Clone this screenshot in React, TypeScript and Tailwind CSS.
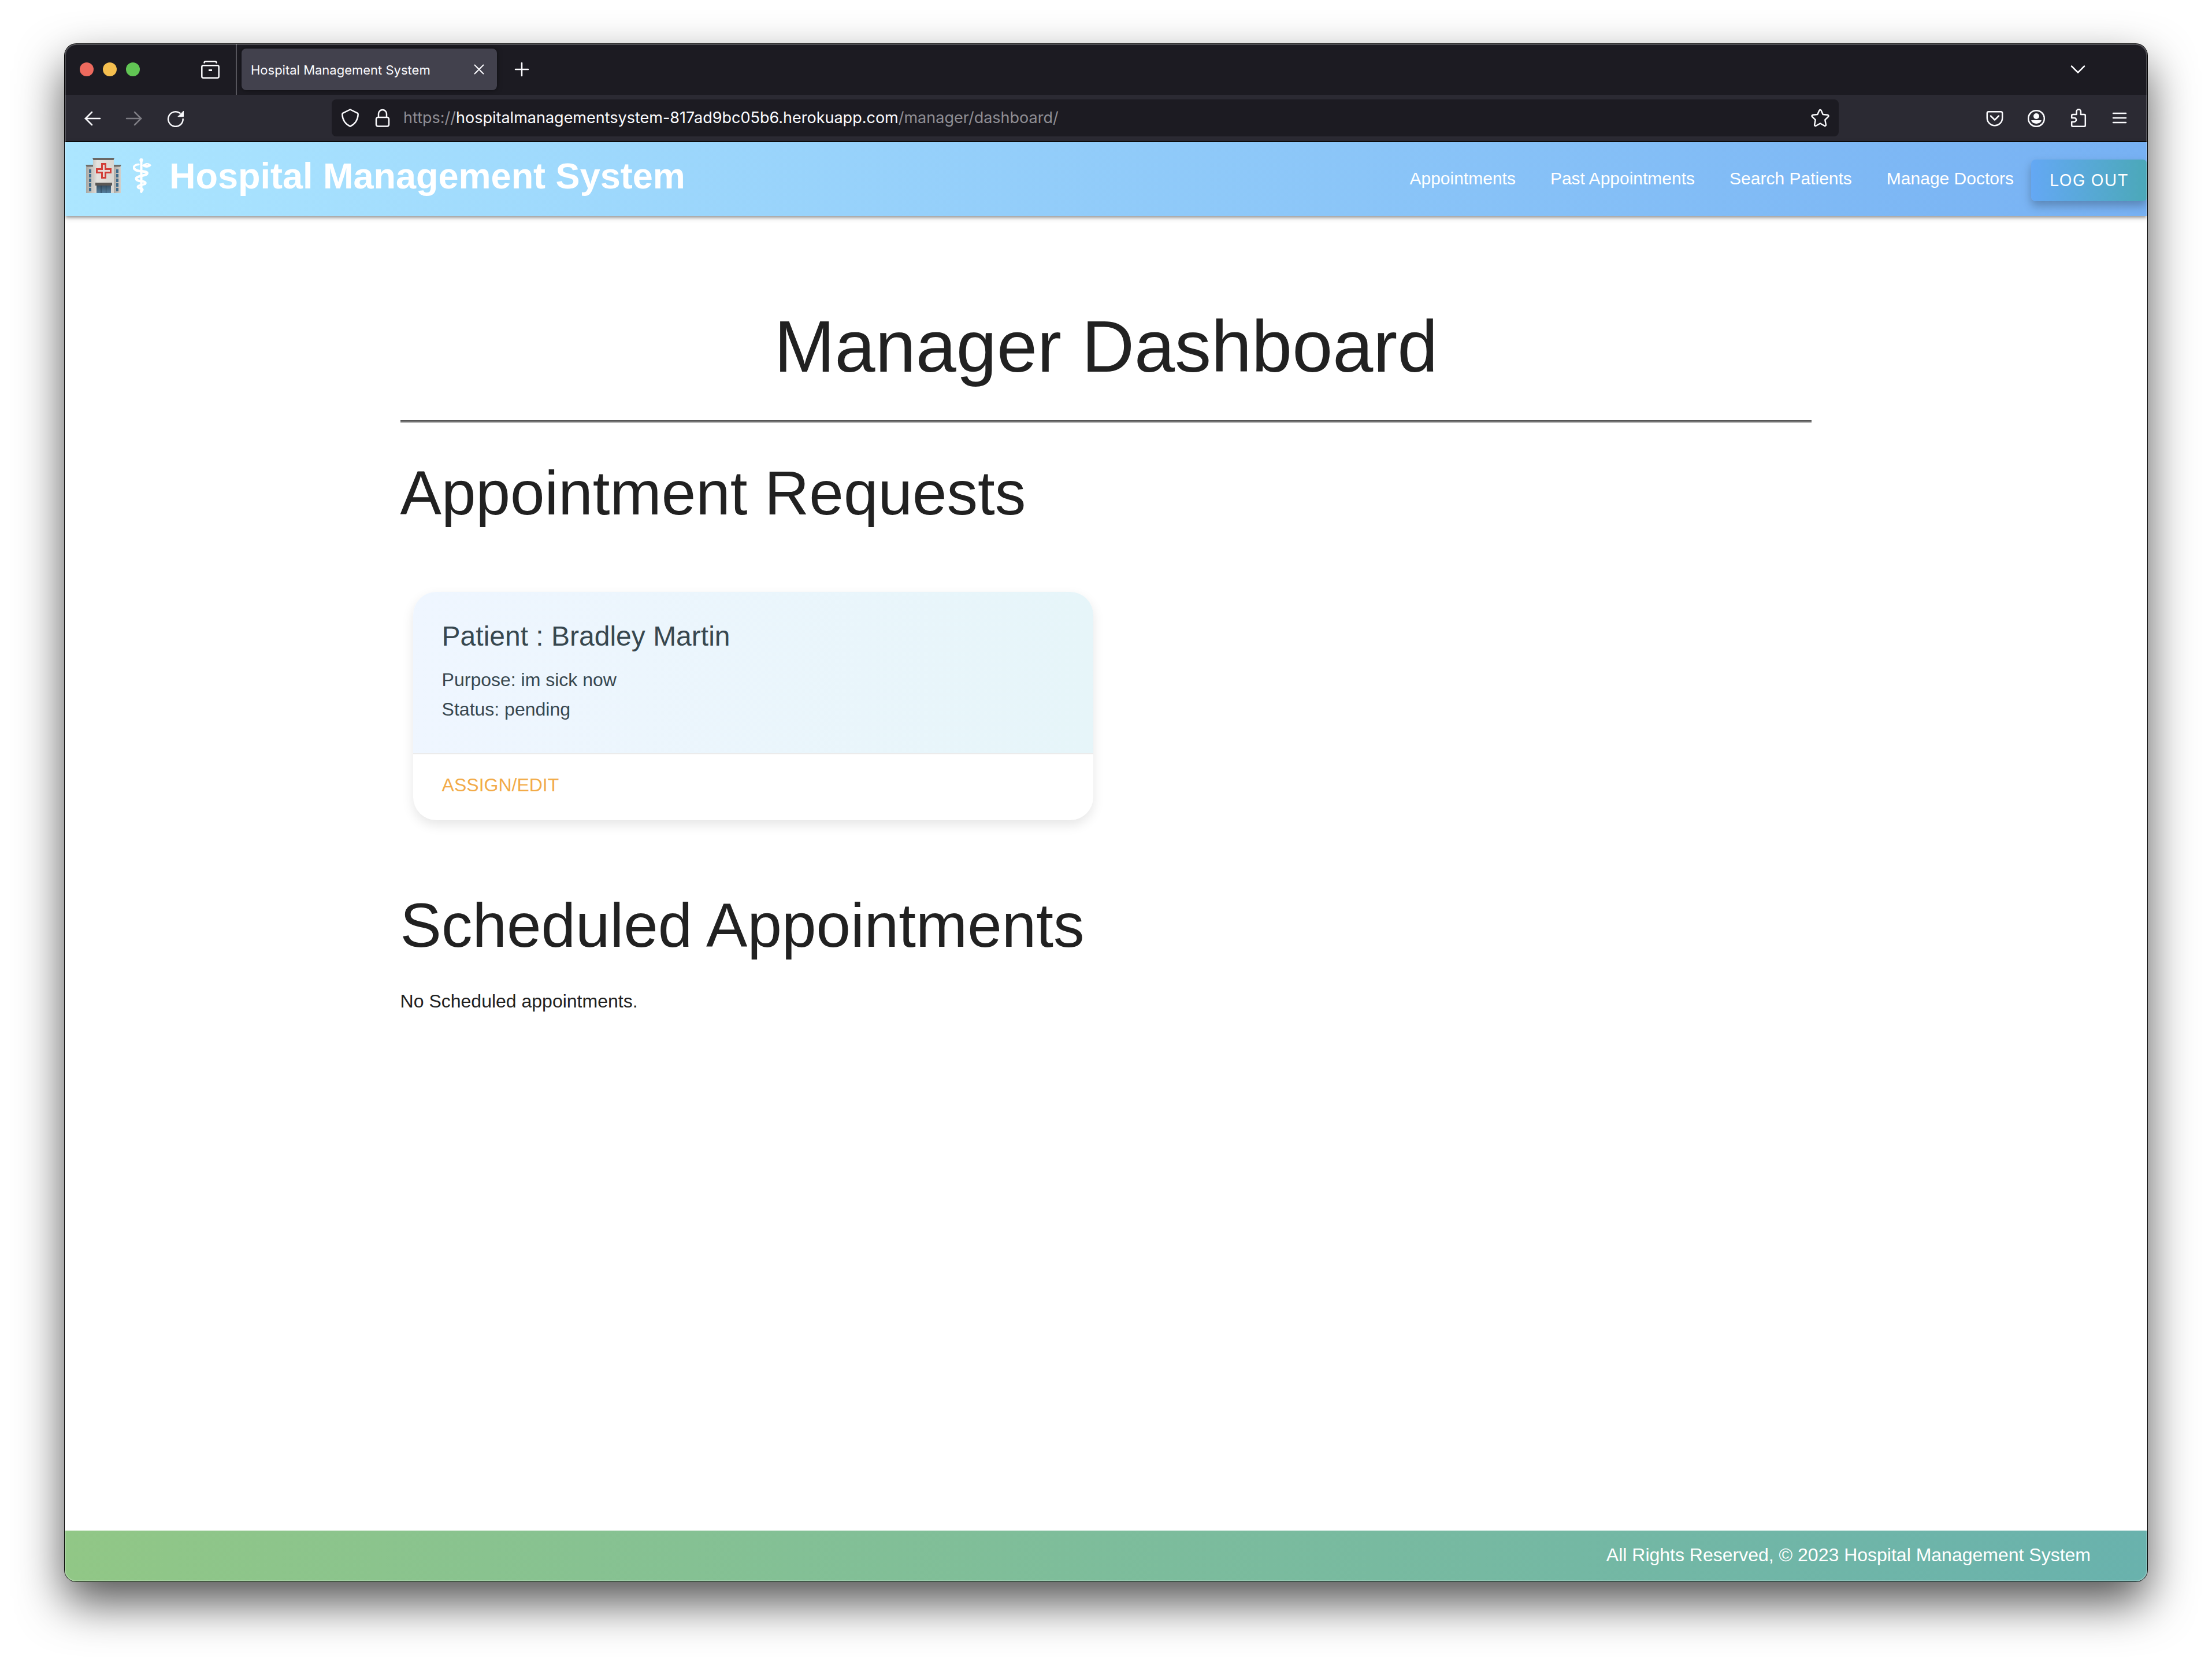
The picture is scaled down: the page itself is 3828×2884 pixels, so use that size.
import React from "react";

type IconProps = { className?: string; children: React.ReactNode };

function Icon({ className = "", children }: IconProps) {
  return (
    <svg
      viewBox="0 0 32 32"
      className={`size-8 shrink-0 ${className}`}
      fill="none"
      stroke="currentColor"
      strokeWidth={2.5}
      strokeLinecap="round"
      strokeLinejoin="round"
      aria-hidden="true"
    >
      {children}
    </svg>
  );
}

function TabBar() {
  return (
    <div className="flex h-[88px] items-center bg-[#1c1b22] text-[#fbfbfe]">
      <div className="flex gap-4 pl-[26px]">
        <button aria-label="Close window" className="size-6 rounded-full bg-[#ed6a5e]" />
        <button aria-label="Minimize window" className="size-6 rounded-full bg-[#f5bf4f]" />
        <button aria-label="Zoom window" className="size-6 rounded-full bg-[#61c554]" />
      </div>
      <button aria-label="Firefox View" className="ml-[106px]">
        <Icon>
          <path d="M5.5 4.5C5.5 2.5 6.500 2.200 8 2.200h16c1.500 0 2.500.3 2.500 2.300" />
          <rect x="1.300" y="9.300" width="29.400" height="21.400" rx="2.500" />
          <path d="M13 17.500h6" strokeLinecap="butt" strokeWidth={3} />
        </Icon>
      </button>
      <div className="ml-7 h-full w-0.5 bg-[#57565d]" />
      <div className="ml-2 flex h-[72px] w-[442px] items-center justify-between rounded-lg bg-[#42414d] pr-[22px] pl-4 shadow-[0_0_8px_rgba(0,0,0,0.5)]">
        <span className="pt-0.5 font-['Inter',sans-serif] text-[22px]">Hospital Management System</span>
        <button aria-label="Close tab">
          <svg viewBox="0 0 18 18" className="size-[18px]" stroke="currentColor" strokeWidth={2} strokeLinecap="round" aria-hidden="true">
            <path d="M1.500 1.500l15 15M16.500 1.500l-15 15" />
          </svg>
        </button>
      </div>
      <button aria-label="New tab" className="ml-[27px]">
        <Icon>
          <path d="M16 5v22M5 16h22" />
        </Icon>
      </button>
      <button aria-label="List all tabs" className="mr-[104px] ml-auto">
        <Icon>
          <path d="M5 10.500l11 11 11-11" />
        </Icon>
      </button>
    </div>
  );
}

function Toolbar() {
  return (
    <div className="flex h-[82px] items-center border-b-2 border-[#0c0c0d] bg-[#2b2a33] text-[#fbfbfe]">
      <div className="flex w-[462px] items-center gap-10 pl-8">
        <button aria-label="Back">
          <Icon>
            <path d="M29 17H3.500M15 6L4 17l11 11" />
          </Icon>
        </button>
        <button aria-label="Forward" className="text-[#7c7b82]">
          <Icon>
            <path d="M3 17h25.500M17 6l11 11-11 11" />
          </Icon>
        </button>
        <button aria-label="Reload">
          <Icon>
            <path d="M28.700 18A12.800 12.800 0 1 1 23.500 7.700" />
            <path d="M29.500 4.500v9.200h-9.200z" fill="currentColor" strokeWidth={1} />
          </Icon>
        </button>
      </div>
      <div className="flex h-16 flex-1 items-center rounded-lg bg-[#1c1b22] pr-4 pl-4">
        <Icon>
          <path d="M16 1.500L28.500 7.700c.9.500 1.300 1.200 1.200 2.300C29.200 20 24.500 26.500 16 30.700 7.500 26.500 2.800 20 2.300 10c-.1-1.100.3-1.800 1.200-2.300z" />
        </Icon>
        <Icon className="ml-6">
          <path d="M9 14V9a7 7 0 0 1 14 0v5" />
          <rect x="5" y="15" width="22" height="15.500" rx="3" />
        </Icon>
        <div className="ml-5 flex-1 font-['Inter',sans-serif] text-[27px] text-[#8f8e94]">
          https://<span className="text-[#fbfbfe]">hospitalmanagementsystem-817ad9bc05b6.herokuapp.com</span>/manager/dashboard/
        </div>
        <button aria-label="Bookmark this page">
          <Icon>
            <path d="M14.300 3.200c.7-1.500 2.700-1.500 3.400 0l3 6.800 7.800.8c1.900.2 2.500 2 1.200 3.300l-5.400 5.200 1.500 8.300c.3 1.800-1.200 2.800-2.700 1.900L16 25.500l-7.100 4c-1.500.9-3-.1-2.700-1.900l1.500-8.300-5.400-5.200c-1.300-1.300-.7-3.100 1.200-3.300l7.800-.8z" />
          </Icon>
        </button>
      </div>
      <div className="flex w-[534px] items-center justify-end gap-10 pr-8">
        <button aria-label="Save to Pocket">
          <Icon>
            <path d="M5.500 5.200h21c1.600 0 2.700 1.100 2.700 2.700v8A13.200 13.200 0 0 1 2.800 16V7.900c0-1.600 1.100-2.700 2.700-2.700z" />
            <path d="M9 12.500l7 7 7-7" />
          </Icon>
        </button>
        <button aria-label="Account">
          <Icon>
            <circle cx="16" cy="17" r="13.800" />
            <circle cx="16" cy="13" r="5" fill="currentColor" stroke="none" />
            <path d="M8 20h16c.6 0 1 .5.700 1.100C23 24.500 20 26 16 26s-7-1.500-8.700-4.900c-.3-.6.100-1.100.7-1.100z" fill="currentColor" stroke="none" />
          </Icon>
        </button>
        <button aria-label="Extensions">
          <Icon>
            <path d="M5.200 16V12a2 2 0 0 1 2-2h6.300V5a3.700 3.700 0 0 1 7.400 0v5h5.900a2 2 0 0 1 2 2v16.700a2 2 0 0 1-2 2H7.200a2 2 0 0 1-2-2V22.700h4.500a3.350 3.350 0 0 0 0-6.700z" />
          </Icon>
        </button>
        <button aria-label="Application menu">
          <Icon>
            <path d="M5 8h22M5 16h22M5 24h22" />
          </Icon>
        </button>
      </div>
    </div>
  );
}

function HospitalEmoji() {
  const rows = [20, 28, 36, 44, 52];
  return (
    <svg viewBox="0 0 62 62" className="h-[62px] w-[62px]" aria-hidden="true">
      <defs>
        <linearGradient id="wing" x1="0" x2="1">
          <stop offset="0" stopColor="#a9a7a2" />
          <stop offset="1" stopColor="#d3d0ca" />
        </linearGradient>
        <linearGradient id="tower" x1="0" x2="1">
          <stop offset="0" stopColor="#cbc8c3" />
          <stop offset="0.2" stopColor="#e4e2de" />
          <stop offset="1" stopColor="#d8d6d1" />
        </linearGradient>
        <linearGradient id="door" x1="0" y1="0" x2="0" y2="1">
          <stop offset="0" stopColor="#34495c" />
          <stop offset="1" stopColor="#54809f" />
        </linearGradient>
      </defs>
      <rect x="1" y="14" width="13" height="47" fill="url(#wing)" />
      <rect x="48" y="14" width="13" height="47" fill="url(#wing)" />
      <path d="M0 12h14v3.500H2z" fill="#6f6c69" />
      <path d="M48 12h14l-2 3.500H48z" fill="#6f6c69" />
      <rect x="13" y="2" width="36" height="59" fill="url(#tower)" />
      <path d="M12 0h38l-1.500 4h-35z" fill="#6b6865" />
      {rows.map((y) => (
        <g key={y} fill="#3f6c8c">
          <rect x="6" y={y} width="4" height="6" />
          <rect x="53" y={y} width="4" height="6" />
        </g>
      ))}
      <path d="M27 9h9v9h9v9h-9v9h-9v-9h-9v-9h9z" fill="#d23f38" />
      <path d="M30 12h3v9h9v3h-9v9h-3v-9h-9v-3h9z" fill="#e6dcd8" />
      <rect x="19" y="46" width="25" height="15" fill="url(#door)" />
      <path d="M27 47v14M35.500 47v14" stroke="#22384a" strokeWidth="1" />
      <rect x="17" y="43" width="29" height="5" fill="#5b5855" />
    </svg>
  );
}

function StaffOfAesculapius() {
  return (
    <svg viewBox="0 0 32 60" className="h-[60px] w-8" fill="none" stroke="white" strokeLinecap="round" aria-hidden="true">
      <circle cx="14.500" cy="3" r="3.200" fill="white" stroke="none" />
      <path d="M14.500 4v54" strokeWidth="4" />
      <path d="M10 10.500C3.500 10.500 0 14.500 2.500 18" strokeWidth="3.500" />
      <path d="M2.500 18c3 4 9 4 15 4.500 6 .5 8.500 2 6.500 4.500C21.500 30 9 30 6 34" strokeWidth="4.500" />
      <path d="M6 34c-1.500 3.500 3 5 9 5.500 6 .5 8 2.500 6 4.500" strokeWidth="4" />
      <path d="M21 44c-2 2-9 1.500-12 4-2 2 .5 3.500 4 4 5 .5 5 3 1 5" strokeWidth="3.500" />
      <path d="M16 12.500c5 4 9 3.500 13 1.500 3-1 3-3-.5-4.500-4-2-8-1-12.500 3z" fill="white" strokeWidth="1" />
      <circle cx="24.500" cy="11" r="1" fill="#a9e1fd" stroke="none" />
    </svg>
  );
}

const links = ["Appointments", "Past Appointments", "Search Patients", "Manage Doctors"];

function SiteHeader() {
  return (
    <header className="relative flex h-32 items-center justify-between bg-linear-to-r from-[#ace6ff] to-[#77b1f3] text-white shadow-[0_4px_4px_0_rgba(0,0,0,0.14),0_6px_2px_-4px_rgba(0,0,0,0.12),0_2px_10px_0_rgba(0,0,0,0.2)]">
      <a href="#" className="flex items-center pb-3 pl-9 text-[63px] font-bold whitespace-nowrap">
        <HospitalEmoji />
        <span className="ml-5">
          <StaffOfAesculapius />
        </span>
        <span className="ml-[31px]">Hospital Management System</span>
      </a>
      <nav className="flex items-center">
        {links.map((label) => (
          <a key={label} href="#" className="px-[30px] pb-1 text-[30px] whitespace-nowrap">
            {label}
          </a>
        ))}
        <button className="mt-1 h-[72px] rounded-lg bg-linear-to-r from-[#64a8f4] to-[#4ba8b8] px-8 font-['Inter',sans-serif] text-[29px] tracking-[1px] whitespace-nowrap shadow-[0_8px_16px_0_rgba(0,0,0,0.25)]">
          LOG OUT
        </button>
      </nav>
    </header>
  );
}

function RequestCard() {
  return (
    <article className="mx-[22px] mt-28 w-[1177px] max-w-full overflow-hidden rounded-[40px] bg-white text-[32px] leading-[51px] text-[#37474f] shadow-[0_8px_20px_rgba(0,0,0,0.1)]">
      <div className="bg-linear-to-r from-[#eff6ff] to-[#e6f5f9] px-[50px] pt-[45px] pb-[50px]">
        <h3 className="mb-[18px] text-[48px] leading-[64px]">Patient : Bradley Martin</h3>
        <p>Purpose: im sick now</p>
        <p>Status: pending</p>
      </div>
      <div className="border-t-2 border-[#ebebeb] px-[50px] pt-7 pb-[35px]">
        <a href="#" className="block text-[#f2ab48]">
          ASSIGN/EDIT
        </a>
      </div>
    </article>
  );
}

export default function App() {
  return (
    <div className="flex min-h-screen flex-col bg-white px-28 pt-[76px] pb-[148px] font-['Liberation_Sans',Arial,sans-serif]">
      <div className="relative flex flex-1 flex-col overflow-hidden rounded-[20px] bg-white shadow-[0_0_0_1px_#000,0_36px_80px_rgba(0,0,0,0.68)]">
        <TabBar />
        <Toolbar />
        <SiteHeader />
        <main className="mx-auto w-[70%] flex-1 px-10 pt-[156px] text-[#212121]">
          <h1 className="text-center text-[126px] leading-[140px]">Manager Dashboard</h1>
          <hr className="mt-[57px] h-1 border-t-2 border-b-2 border-t-[#555555] border-b-[#808080]" />
          <h2 className="mt-[63px] text-[107px] leading-[118px]">Appointment Requests</h2>
          <RequestCard />
          <h2 className="mt-[123px] text-[107px] leading-[118px]">Scheduled Appointments</h2>
          <p className="mt-12 text-[32px] leading-[48px]">No Scheduled appointments.</p>
        </main>
        <footer className="flex h-[88px] items-center justify-end bg-linear-to-r from-[#91c786] to-[#69b2ad] px-[98px] pb-1 text-[32px] text-white">
          All Rights Reserved, © 2023 Hospital Management System
        </footer>
        <div className="pointer-events-none absolute inset-0 rounded-[20px] shadow-[inset_0_0_0_2px_rgba(255,255,255,0.22)]" />
      </div>
    </div>
  );
}
